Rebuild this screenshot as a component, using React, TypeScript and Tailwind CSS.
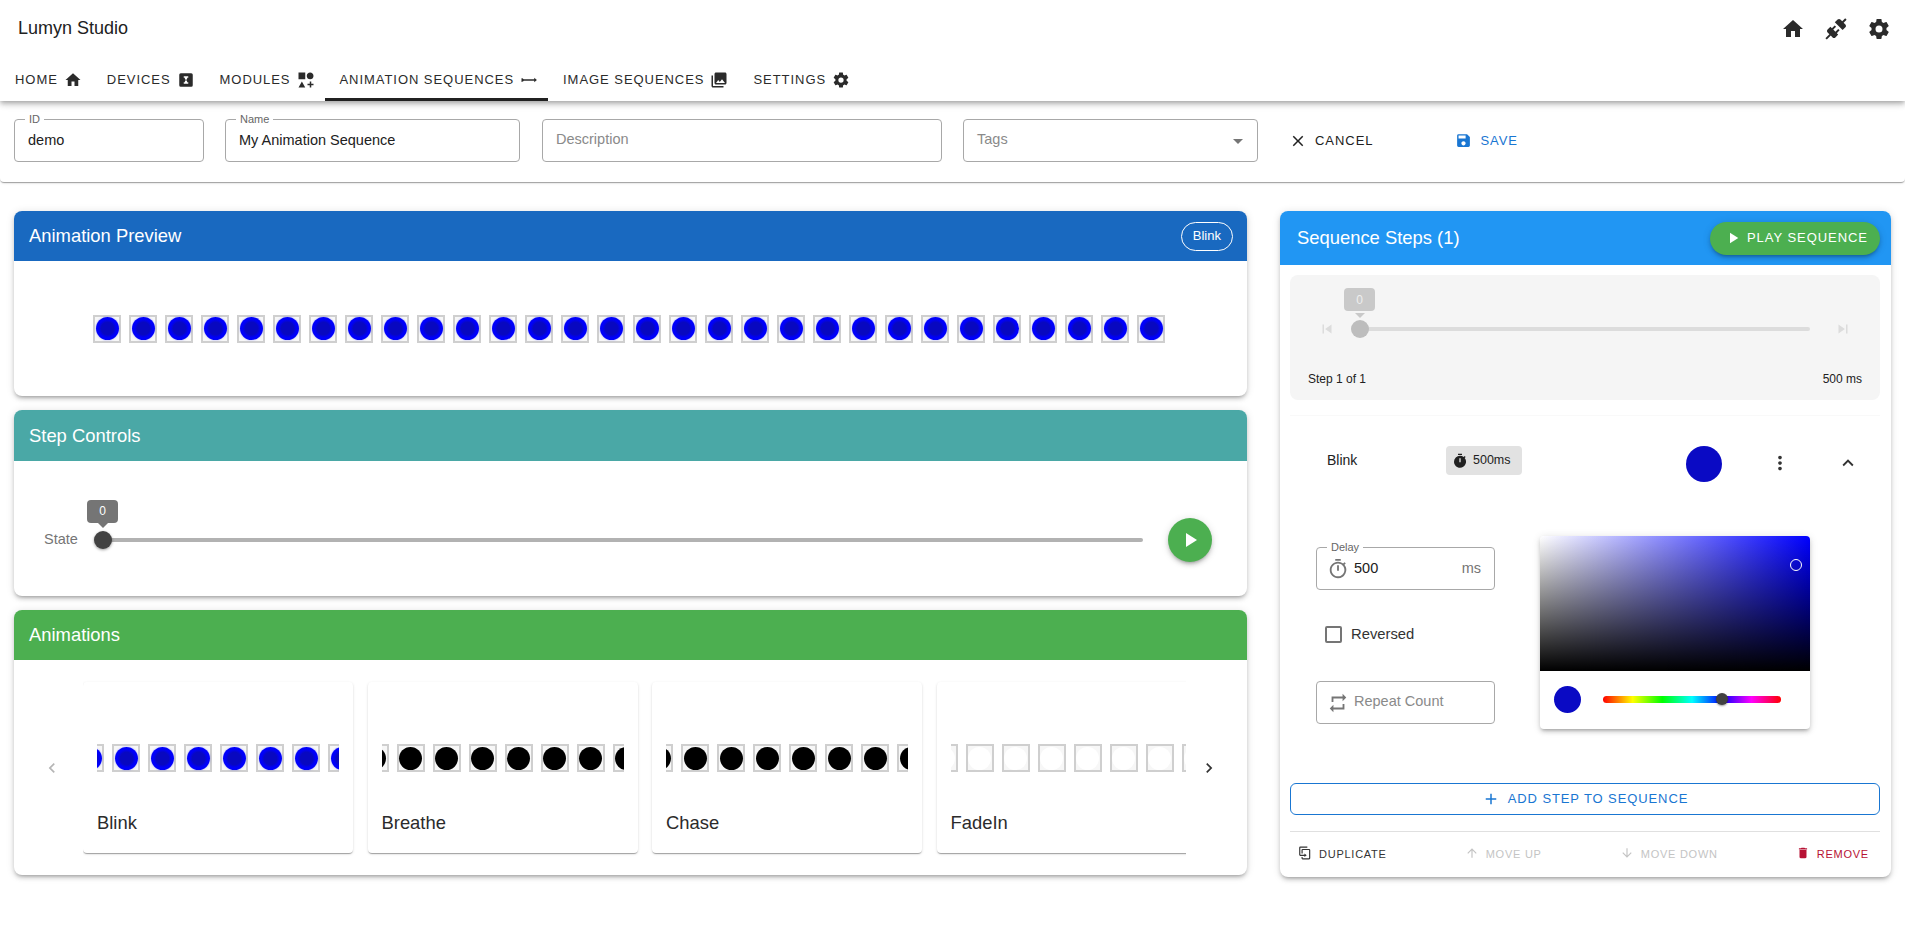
import { ReactNode } from 'react';
import {
  MdAdd,
  MdArrowDownward,
  MdArrowDropDown,
  MdArrowUpward,
  MdChevronLeft,
  MdChevronRight,
  MdClose,
  MdDelete,
  MdExpandLess,
  MdHome,
  MdMoreVert,
  MdOutlineTimer,
  MdPhotoLibrary,
  MdPlayArrow,
  MdRepeat,
  MdSave,
  MdSkipNext,
  MdSkipPrevious,
  MdTimer,
} from 'react-icons/md';

const COG =
  'M12,15.5A3.5,3.5 0 0,1 8.5,12A3.5,3.5 0 0,1 12,8.5A3.5,3.5 0 0,1 15.5,12A3.5,3.5 0 0,1 12,15.5M19.43,12.97C19.47,12.65 19.5,12.33 19.5,12C19.5,11.67 19.47,11.34 19.43,11L21.54,9.37C21.73,9.22 21.78,8.95 21.66,8.73L19.66,5.27C19.54,5.05 19.27,4.96 19.05,5.05L16.56,6.05C16.04,5.66 15.5,5.32 14.87,5.07L14.5,2.42C14.46,2.18 14.25,2 14,2H10C9.75,2 9.54,2.18 9.5,2.42L9.13,5.07C8.5,5.32 7.96,5.66 7.44,6.05L4.95,5.05C4.73,4.96 4.46,5.05 4.34,5.27L2.34,8.73C2.21,8.95 2.27,9.22 2.46,9.37L4.57,11C4.53,11.34 4.5,11.67 4.5,12C4.5,12.33 4.53,12.65 4.57,12.97L2.46,14.63C2.27,14.78 2.21,15.05 2.34,15.27L4.34,18.73C4.46,18.95 4.73,19.03 4.95,18.95L7.44,17.94C7.96,18.34 8.5,18.68 9.13,18.93L9.5,21.58C9.54,21.82 9.75,22 10,22H14C14.25,22 14.46,21.82 14.5,21.58L14.87,18.93C15.5,18.67 16.04,18.34 16.56,17.94L19.05,18.95C19.27,19.03 19.54,18.95 19.66,18.73L21.66,15.27C21.78,15.05 21.73,14.78 21.54,14.63L19.43,12.97Z';
const PLUG =
  'M21.4 7.5C22.2 8.3 22.2 9.6 21.4 10.3L18.6 13.1L10.8 5.3L13.6 2.5C14.4 1.7 15.7 1.7 16.4 2.5L18.2 4.3L21.2 1.3L22.6 2.7L19.6 5.7L21.4 7.5M15.6 13.3L14.2 11.9L11.4 14.7L9.3 12.6L12.1 9.8L10.7 8.4L7.9 11.2L6.4 9.8L3.6 12.6C2.8 13.4 2.8 14.7 3.6 15.4L5.4 17.2L1.4 21.2L2.8 22.6L6.8 18.6L8.6 20.4C9.4 21.2 10.7 21.2 11.4 20.4L14.2 17.6L12.8 16.2L15.6 13.3Z';
const SHAPES =
  'M2,2H11V11H2V2M17.5,2C20,2 22,4 22,6.5C22,9 20,11 17.5,11C15,11 13,9 13,6.5C13,4 15,2 17.5,2M6.5,14L11,22H2L6.5,14M19,17H22V19H19V22H17V19H14V17H17V14H19V17Z';
const CHIP =
  'M5,3H19A2,2 0 0,1 21,5V19A2,2 0 0,1 19,21H5A2,2 0 0,1 3,19V5A2,2 0 0,1 5,3M9,7V9H10.5V10.5L12,12L10.5,13.5V15H9V17H15V15H13.5V13.5L12,12L13.5,10.5V9H15V7H9Z';
const RAY =
  'M2,9.5C3.4,9.5 4.4,10.1 5,11H19V9L22.5,12L19,15V13H5C4.4,13.9 3.4,14.5 2,14.5V9.5Z';
const DUPLICATE =
  'M11,17H4A2,2 0 0,1 2,15V3A2,2 0 0,1 4,1H16V3H4V15H11V13L15,16L11,19V17M19,21V7H8V13H6V7A2,2 0 0,1 8,5H19A2,2 0 0,1 21,7V21A2,2 0 0,1 19,23H8A2,2 0 0,1 6,21V19H8V21H19Z';

function PathIcon({ d, size = 24, className = '' }: { d: string; size?: number; className?: string }) {
  return (
    <svg width={size} height={size} viewBox="0 0 24 24" fill="currentColor" className={className}>
      <path d={d} />
    </svg>
  );
}

const TABS: { label: string; icon: ReactNode; active?: boolean }[] = [
  { label: 'Home', icon: <MdHome size={18} /> },
  { label: 'Devices', icon: <PathIcon d={CHIP} size={18} /> },
  { label: 'Modules', icon: <PathIcon d={SHAPES} size={18} /> },
  { label: 'Animation Sequences', icon: <PathIcon d={RAY} size={18} />, active: true },
  { label: 'Image Sequences', icon: <MdPhotoLibrary size={18} /> },
  { label: 'Settings', icon: <PathIcon d={COG} size={18} /> },
];

const CARD_SHADOW =
  'shadow-[0px_3px_3px_-2px_rgba(0,0,0,0.2),0px_3px_4px_0px_rgba(0,0,0,0.14),0px_1px_8px_0px_rgba(0,0,0,0.12)]';

function Field({
  label,
  value,
  placeholder,
  className = '',
  left,
  right,
}: {
  label?: string;
  value?: string;
  placeholder?: string;
  className?: string;
  left?: ReactNode;
  right?: ReactNode;
}) {
  return (
    <div className={`relative h-[43px] shrink-0 rounded border border-[#a8a8a8] flex items-center px-[13px] ${className}`}>
      {label && (
        <span className="absolute -top-[8px] left-[10px] bg-white px-[4px] text-[11px] leading-[14px] text-[#666]">{label}</span>
      )}
      {left}
      {value ? (
        <span className="text-[14.5px] text-[#212121]">{value}</span>
      ) : (
        <span className="text-[14.5px] text-[#8a8a8a] -mt-[2px]">{placeholder}</span>
      )}
      {right}
    </div>
  );
}

function Led({ kind }: { kind: 'blue' | 'black' | 'off' }) {
  return (
    <div className="w-[28px] h-[28px] shrink-0 border-2 border-[#cfcfcf] bg-[#f7f7f7] flex items-center justify-center">
      {kind === 'blue' && (
        <div className="w-[23px] h-[23px] shrink-0 rounded-full bg-[radial-gradient(circle,#0808c0_0%,#0808c0_38%,#0000fa_56%)] shadow-[0_0_2px_rgba(0,0,255,0.35)]" />
      )}
      {kind === 'black' && <div className="w-[23px] h-[23px] shrink-0 rounded-full bg-black" />}
      {kind === 'off' && <div className="w-[23px] h-[23px] shrink-0 rounded-full bg-white" />}
    </div>
  );
}

function Panel({
  title,
  headerClass,
  action,
  children,
}: {
  title: string;
  headerClass: string;
  action?: ReactNode;
  children: ReactNode;
}) {
  return (
    <section className={`rounded-lg bg-white overflow-hidden ${CARD_SHADOW}`}>
      <div className={`h-[50px] pl-[15px] pr-[14px] flex items-center justify-between text-white text-[18.4px] ${headerClass}`}>
        <span>{title}</span>
        {action}
      </div>
      {children}
    </section>
  );
}

const ANIMATIONS: { name: string; kind: 'blue' | 'black' | 'off' }[] = [
  { name: 'Blink', kind: 'blue' },
  { name: 'Breathe', kind: 'black' },
  { name: 'Chase', kind: 'black' },
  { name: 'FadeIn', kind: 'off' },
];

export default function App() {
  return (
    <div className="min-h-screen bg-white font-['Liberation_Sans',Arial,sans-serif] text-[#212121]">
      {/* App bar */}
      <header className="relative z-10 h-[101px] bg-white shadow-[0px_2px_4px_-1px_rgba(0,0,0,0.2),0px_4px_5px_0px_rgba(0,0,0,0.14),0px_1px_10px_0px_rgba(0,0,0,0.12)]">
        <div className="h-[57px] pl-[18px] pr-[14px] flex items-center justify-between">
          <span className="text-[18px]">Lumyn Studio</span>
          <div className="flex items-center gap-[19px] text-[#2b2b2b]">
            <MdHome size={24} />
            <PathIcon d={PLUG} />
            <PathIcon d={COG} />
          </div>
        </div>
        <nav className="h-[44px] flex">
          {TABS.map((tab) => (
            <div
              key={tab.label}
              className={`flex items-center gap-[6px] pl-[15px] pr-[10px] pt-[5px] text-[13px] uppercase tracking-[0.95px] text-[#2b2b2b] border-b-[3px] ${
                tab.active ? 'border-[#212121]' : 'border-transparent'
              }`}
            >
              {tab.label}
              {tab.icon}
            </div>
          ))}
        </nav>
      </header>

      {/* Sequence meta */}
      <div className="h-[81px] pt-[18px] pl-[14px] flex items-start rounded-b bg-white shadow-[0px_2px_1px_-1px_rgba(0,0,0,0.2),0px_1px_1px_0px_rgba(0,0,0,0.14),0px_1px_3px_0px_rgba(0,0,0,0.12)]">
        <Field label="ID" value="demo" className="w-[190px]" />
        <Field label="Name" value="My Animation Sequence" className="w-[295px] ml-[21px]" />
        <Field placeholder="Description" className="w-[400px] ml-[22px]" />
        <Field
          placeholder="Tags"
          className="w-[295px] ml-[21px] justify-between"
          right={<MdArrowDropDown size={24} className="text-[#757575] -mr-[6px]" />}
        />
        <div className="ml-[31px] h-[43px] flex items-center gap-[8px] text-[13px] tracking-[0.95px]">
          <MdClose size={18} />
          CANCEL
        </div>
        <div className="ml-[82px] h-[43px] flex items-center gap-[8px] text-[13px] tracking-[0.95px] text-[#1976d2]">
          <MdSave size={17} />
          SAVE
        </div>
      </div>

      <main className="pt-[29px] pl-[14px] flex items-start">
        {/* Left column */}
        <div className="w-[1233px] flex flex-col gap-[14px]">
          <Panel
            title="Animation Preview"
            headerClass="bg-[#1969c0]"
            action={
              <span className="h-[29px] px-[11px] rounded-full border border-white flex items-center text-[13px]">Blink</span>
            }
          >
            <div className="h-[135px] flex items-center justify-center gap-[8px] pr-[3px]">
              {Array.from({ length: 30 }).map((_, i) => (
                <Led key={i} kind="blue" />
              ))}
            </div>
          </Panel>

          <Panel title="Step Controls" headerClass="bg-[#4aa8a6] h-[51px]">
            <div className="h-[135px] pl-[29px] pt-[22px] flex items-center">
              <span className="w-[60px] pl-[1px] text-[14.5px] text-[#757575]">State</span>
              <div className="relative w-[1040px] h-[4px] bg-[#b2b2b2] rounded-full">
                <div className="absolute -left-[9px] -top-[7px] w-[18px] h-[18px] rounded-full bg-[#424242] shadow-[0_1px_3px_rgba(0,0,0,0.4)]" />
                <div className="absolute -left-[16px] -top-[38px] w-[31px] h-[23px] rounded bg-[#757575] text-white text-[12px] flex items-center justify-center">
                  0
                </div>
                <div className="absolute -left-[5px] -top-[15px] border-x-[5px] border-x-transparent border-t-[5px] border-t-[#757575]" />
              </div>
              <div className={`ml-[25px] w-[44px] h-[44px] rounded-full bg-[#4caf50] text-white flex items-center justify-center ${CARD_SHADOW}`}>
                <MdPlayArrow size={24} />
              </div>
            </div>
          </Panel>

          <Panel title="Animations" headerClass="bg-[#4caf50]">
            <div className="h-[215px] flex">
              <div className="w-[69px] shrink-0 flex items-center justify-center text-[#b5b5b5] pl-[7px]">
                <MdChevronLeft size={20} />
              </div>
              <div className="w-[1103px] shrink-0 overflow-hidden pt-[22px] flex gap-[14.5px]">
                {ANIMATIONS.map((a) => (
                  <div
                    key={a.name}
                    className="w-[270px] h-[171px] shrink-0 rounded bg-white px-[14px] pt-[62px] shadow-[0px_2px_1px_-1px_rgba(0,0,0,0.2),0px_1px_1px_0px_rgba(0,0,0,0.14),0px_1px_3px_0px_rgba(0,0,0,0.12)]"
                  >
                    <div className="overflow-hidden">
                      <div className="flex gap-[8px] -ml-[21px]">
                        {Array.from({ length: 8 }).map((_, i) => (
                          <Led key={i} kind={a.kind} />
                        ))}
                      </div>
                    </div>
                    <div className="mt-[37px] text-[18.4px] leading-[28px] text-[#2b2b2b]">{a.name}</div>
                  </div>
                ))}
              </div>
              <div className="w-[46px] flex items-center justify-center text-[#333]">
                <MdChevronRight size={20} />
              </div>
            </div>
          </Panel>
        </div>

        {/* Right column */}
        <aside className={`ml-[33px] w-[611px] rounded-lg bg-white overflow-hidden ${CARD_SHADOW}`}>
          <div className="h-[54px] pl-[17px] pr-[11px] bg-[#2196f3] flex items-center justify-between text-white text-[18.4px]">
            <span>Sequence Steps (1)</span>
            <div className={`h-[33px] w-[170px] rounded-full bg-[#4caf50] flex items-center pl-[14px] gap-[5px] text-[13px] tracking-[0.95px] whitespace-nowrap ${CARD_SHADOW}`}>
              <MdPlayArrow size={18} />
              PLAY SEQUENCE
            </div>
          </div>

          <div className="pl-[10px] pr-[11px] pt-[10px]">
            {/* Playback */}
            <div className="h-[125px] rounded-lg bg-[#f5f5f5] px-[18px] pt-[54px] flex flex-col">
              <div className="h-0 flex items-center">
                <MdSkipPrevious size={18} className="ml-[10px] text-[#dcdcdc]" />
                <div className="relative ml-[24px] w-[450px] h-[4px] rounded-full bg-[#dcdcdc]">
                  <div className="absolute -left-[9px] -top-[7px] w-[18px] h-[18px] rounded-full bg-[#bdbdbd]" />
                  <div className="absolute -left-[16px] -top-[39px] w-[31px] h-[23px] rounded bg-[#c9c9c9] text-[#eeeeee] text-[12px] flex items-center justify-center">
                    0
                  </div>
                  <div className="absolute -left-[5px] -top-[14px] border-x-[5px] border-x-transparent border-t-[5px] border-t-[#c9c9c9]" />
                </div>
                <MdSkipNext size={18} className="ml-[24px] text-[#dcdcdc]" />
              </div>
              <div className="mt-[41px] flex justify-between text-[12px]">
                <span>Step 1 of 1</span>
                <span>500 ms</span>
              </div>
            </div>

            {/* Step */}
            <div className="mt-[15px] h-[342px] border-t border-[#f9f9f9] pt-[30px]">
              <div className="h-[36px] pl-[37px] flex items-center">
                <span className="w-[119px] text-[14px] -mt-[8px]">Blink</span>
                <span className="w-[76px] h-[29px] -mt-[7px] rounded bg-[#e2e2e2] flex items-center pl-[6px] gap-[5px] text-[12.5px]">
                  <MdTimer size={16} />
                  500ms
                </span>
                <div className="ml-[164px] w-[36px] h-[36px] rounded-full bg-[#0a0ac4]" />
                <MdMoreVert size={22} className="ml-[47px] -mt-[2px] text-[#333]" />
                <MdExpandLess size={22} className="ml-[46px] -mt-[2px] text-[#333]" />
              </div>

              <div className="mt-[54px] pl-[26px] flex items-start">
                <div className="w-[179px] shrink-0 pt-[11px]">
                  <Field
                    label="Delay"
                    value="500"
                    className="justify-start w-[179px]"
                    left={<MdOutlineTimer size={22} className="text-[#757575] -ml-[3px] mr-[5px] shrink-0" />}
                    right={<span className="ml-auto text-[14.5px] text-[#757575]">ms</span>}
                  />
                  <div className="mt-[36px] h-[16px] pl-[9px] flex items-center">
                    <span className="w-[17px] h-[17px] rounded-[2px] border-2 border-[#757575]" />
                    <span className="ml-[9px] text-[14.8px] text-[#333]">Reversed</span>
                  </div>
                  <Field
                    placeholder="Repeat Count"
                    className="mt-[39px] w-[179px]"
                    left={<MdRepeat size={22} className="text-[#757575] -ml-[3px] mr-[5px] shrink-0" />}
                  />
                </div>
                <div className={`ml-[45px] w-[270px] h-[193px] rounded bg-white overflow-hidden ${CARD_SHADOW}`}>
                  <div className="relative h-[135px] bg-[linear-gradient(to_right,#fff,#00f)]">
                    <div className="absolute inset-0 bg-[linear-gradient(to_bottom,transparent,#000)]" />
                    <div className="absolute left-[250px] top-[23px] w-[12px] h-[12px] rounded-full border-[1.5px] border-white" />
                  </div>
                  <div className="h-[58px] pl-[14px] pb-[2px] flex items-center">
                    <div className="w-[27px] h-[27px] rounded-full bg-[#0a0ac4]" />
                    <div className="relative ml-[22px] w-[178px] h-[7px] rounded-full bg-[linear-gradient(to_right,#f00,#ff0,#0f0,#0ff,#00f,#f0f,#f00)]">
                      <div className="absolute left-[113px] -top-[3px] w-[12px] h-[12px] rounded-full bg-[#424242] shadow-[0_1px_2px_rgba(0,0,0,0.4)]" />
                    </div>
                  </div>
                </div>
              </div>
            </div>

            <div className="mt-[26px] h-[32px] rounded-md border border-[#1976d2] flex items-center justify-center gap-[8px] text-[13px] tracking-[0.9px] text-[#1976d2]">
              <MdAdd size={18} />
              ADD STEP TO SEQUENCE
            </div>

            <div className="mt-[16px] h-[46px] border-t border-[#e0e0e0] pl-[8px] pr-[11px] flex items-center justify-between text-[11px] tracking-[0.75px]">
              <span className="flex items-center gap-[7px] text-[#333]">
                <PathIcon d={DUPLICATE} size={14} className="-mt-[3px]" />
                DUPLICATE
              </span>
              <span className="flex items-center gap-[7px] text-[#c4c4c4]">
                <MdArrowUpward size={14} className="-mt-[3px]" />
                MOVE UP
              </span>
              <span className="flex items-center gap-[7px] text-[#c4c4c4]">
                <MdArrowDownward size={14} className="-mt-[3px]" />
                MOVE DOWN
              </span>
              <span className="flex items-center gap-[7px] text-[#b71234]">
                <MdDelete size={14} className="-mt-[3px]" />
                REMOVE
              </span>
            </div>
          </div>
        </aside>
      </main>
    </div>
  );
}
